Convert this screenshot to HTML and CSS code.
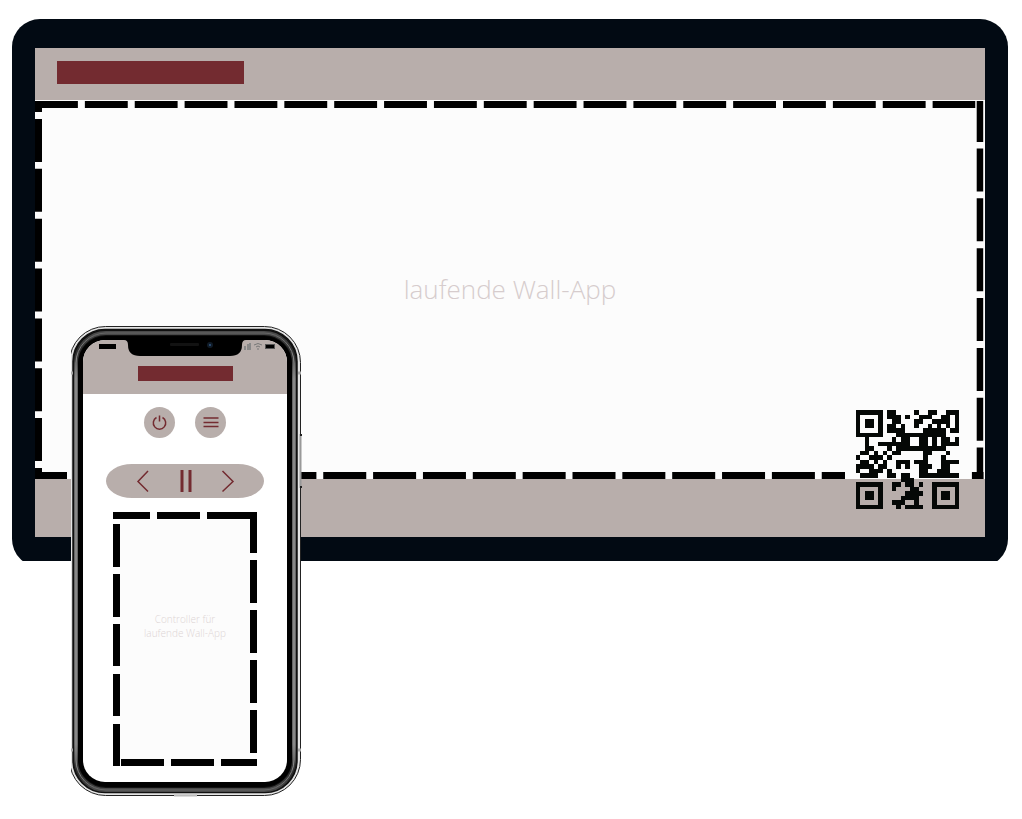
FILE: index.html
```html
<!DOCTYPE html>
<html lang="de">
<head>
<meta charset="utf-8">
<meta name="viewport" content="width=device-width, initial-scale=1">
<title>Wall-App</title>
<link rel="stylesheet" href="styles.css">
</head>
<body>
<main class="stage">
  <section class="wall">
    <div class="wall-screen">
      <header class="wall-header"><div class="wall-logo"></div></header>
      <div class="wall-app">
        <svg class="dashes" aria-hidden="true">
          <svg x="0" y="1" width="99%" height="7" viewBox="0 0 943 7" preserveAspectRatio="none"><path d="M0 3.5H943" stroke-dasharray="43 7"/></svg>
          <svg x="0" y="0" width="7" height="379"><path d="M3.5 1V12M3.5 19V379" stroke-dasharray="43 6.85"/></svg>
          <svg x="99.1%" y="0" width="7" height="379"><path d="M3.5 1V42M3.5 48.5V379" stroke-dasharray="43 6.85"/></svg>
          <svg x="0" y="372" width="810" height="7"><path d="M0 3.5H32M39 3.5H810" stroke-dasharray="43 6.85"/></svg>
          <svg x="98.6%" y="372" width="12" height="7"><path d="M0 3.5H12"/></svg>
        </svg>
        <p class="wall-label">laufende Wall-App</p>
      </div>
      <footer class="wall-footer"></footer>
      <svg class="qr" viewBox="0 0 23 22" preserveAspectRatio="none" role="img" aria-label="QR-Code"><path id="qr-path"/></svg>
    </div>
  </section>

  <section class="phone">
    <svg class="phone-frame" viewBox="0 0 231 471" aria-hidden="true">
      <defs>
        <linearGradient id="rim" x1="0" y1="0" x2="0" y2="1">
          <stop offset="0" stop-color="#4a4a4a"/><stop offset=".04" stop-color="#2c2c2c"/><stop offset=".1" stop-color="#666"/><stop offset=".9" stop-color="#666"/><stop offset=".96" stop-color="#2c2c2c"/><stop offset="1" stop-color="#4a4a4a"/>
        </linearGradient>
        <linearGradient id="shine" x1="0" y1="0" x2="0" y2="1">
          <stop offset="0" stop-color="#666"/><stop offset=".1" stop-color="#aaa"/><stop offset=".9" stop-color="#aaa"/><stop offset="1" stop-color="#666"/>
        </linearGradient>
      </defs>
      <rect x="-1.5" y=".5" width="231" height="469" rx="36" fill="#e4e4e4" stroke="#222"/>
      <rect x="2" y="3.5" width="224" height="463" rx="32" fill="#111" stroke="#111" stroke-width="1.500"/>
      <rect x="5" y="7" width="218" height="457" rx="30" fill="none" stroke="url(#rim)" stroke-width="4"/>
      <rect x="5" y="7" width="218" height="457" rx="30" fill="none" stroke="url(#shine)"/>
      <rect x="7" y="10" width="214" height="451" rx="28" fill="#000"/>
      <path d="M229.500 108V162" stroke="#999" stroke-width="2"/>
      <path d="M230 108V110M230 160V162" stroke="#222" stroke-width="2"/>
      <path d="M0 47H2M227 47H230M0 424H2M227 424H230" stroke="#aaa" stroke-width="3"/>
      <path d="M103 469.500H126" stroke="#bbb" stroke-width="2"/>
    </svg>
    <div class="phone-screen">
      <header class="phone-header">
        <svg class="status" viewBox="0 0 204 18" aria-hidden="true">
          <path d="M41 0Q45 0 45 5Q45 16 57 16H147Q159 16 159 5Q159 0 163 0Z"/>
          <rect x="87" y="3" width="29" height="3" rx="1" fill="#121212"/>
          <circle cx="127" cy="5" r="3" fill="#101b27"/><circle cx="127" cy="5" r="1" fill="#315984"/>
          <path d="M16 4H33V9H16Z"/>
          <path d="M161 6h2v4h-2zM164 4h2v6h-2zM166 3h2v7h-2z" fill="#888"/>
          <path d="M171 5Q175 2 179 5M173 7Q175 5 177 7M174 9h2" fill="none" stroke="#777"/>
          <rect x="182.500" y="4.500" width="9" height="4" stroke="#555"/>
        </svg>
        <div class="phone-logo"></div>
      </header>
      <div class="phone-body">
        <div class="round-row">
          <button class="round" type="button" aria-label="Ein/Aus"><svg width="16" height="16" viewBox="0 0 16 16"><path d="M4.500 2.500A6.200 6.200 0 1 0 10.500 2.500M7.500 .5V6.500"/></svg></button>
          <button class="round" type="button" aria-label="Menü"><svg width="16" height="16" viewBox="0 0 16 16"><path d="M.5 3H15.500M.5 7.500H15.500M.5 11.500H15.500"/></svg></button>
        </div>
        <div class="pill">
          <button type="button" aria-label="Zurück"><svg width="14" height="24" viewBox="0 0 14 24"><path d="M13 2L3 12.500L13 22.500"/></svg></button>
          <button type="button" aria-label="Pause"><svg width="14" height="24" viewBox="0 0 14 24"><path class="bars" d="M4 1V23M12 1V23"/></svg></button>
          <button type="button" aria-label="Weiter"><svg width="14" height="24" viewBox="0 0 14 24"><path d="M1.500 2L12 12.500L1.500 22.500"/></svg></button>
        </div>
        <div class="controller">
          <svg class="dashes" viewBox="0 0 144 254" aria-hidden="true">
            <path d="M0 3.500H37M44 3.500H87M94 3.500H137M140.500 0V41M140.500 48V91M140.500 98V141M140.500 148V191M140.500 198V241M3.500 12V55M3.500 62V105M3.500 112V154M3.500 162V204M3.500 212V254M8 250.500H51M58 250.500H101M108 250.500H144"/>
          </svg>
          <p>Controller für<br>laufende Wall-App</p>
        </div>
      </div>
    </div>
  </section>
</main>
<script src="qr.js"></script>
</body>
</html>
```
FILE: styles.css
```css
* { box-sizing: border-box; }
body {
  margin: 0;
  background: #fff;
  font-family: "Open Sans", "Noto Sans", sans-serif;
  font-weight: 300;
}
p { margin: 0; }
.stage {
  position: relative;
  min-height: 100vh;
  padding: 19px 14px 0 12px;
}
.wall {
  padding: 29px 23px 30px;
  border-radius: 28px;
  background: #020a13;
  clip-path: inset(0 0 6px 0);
}
.wall-screen { position: relative; background: #b8aeab; }
.wall-header { height: 52px; padding: 13px 22px; }
.wall-logo { width: 187px; height: 23px; background: #732b30; }
.wall-app {
  position: relative;
  display: grid;
  place-items: center;
  height: 379px;
  background: #fcfcfc;
}
.dashes {
  position: absolute;
  inset: 0;
  width: 100%;
  height: 100%;
  fill: none;
  stroke: #000;
  stroke-width: 7px;
}
.wall-label {
  padding-bottom: 2px;
  font-size: 26px;
  line-height: 36px;
  color: #d6cccd;
}
.wall-footer { height: 58px; }
.qr {
  position: absolute;
  right: 26px;
  bottom: 28px;
  width: 103px;
  height: 99px;
  fill: #050806;
  shape-rendering: crispEdges;
}
.phone {
  position: absolute;
  left: 71px;
  top: 326px;
  width: 231px;
  padding: 14px 15px 15px 12px;
}
.phone-frame { position: absolute; left: 0; top: 0; width: 231px; height: 471px; }
.phone-screen {
  position: relative;
  overflow: hidden;
  border-radius: 22px;
  background: #fff;
}
.phone-header {
  display: flex;
  flex-direction: column;
  align-items: center;
  gap: 8px;
  height: 54px;
  background: #b8aeab;
}
.status { display: block; width: 100%; height: 18px; }
.phone-logo { width: 95px; height: 15px; background: #732b30; }
.phone-body {
  display: flex;
  flex-direction: column;
  align-items: center;
  padding: 13px 0 16px;
}
button { padding: 0; border: 0; background: none; }
button svg { display: block; fill: none; stroke: #732b30; stroke-width: 1.5px; }
.round-row { display: flex; gap: 20px; margin-bottom: 26px; }
.round {
  display: grid;
  place-items: center;
  width: 31px;
  height: 31px;
  border-radius: 50%;
  background: #b8aeab;
}
.pill {
  display: flex;
  align-items: center;
  justify-content: center;
  gap: 29px;
  width: 158px;
  height: 34px;
  margin-bottom: 14px;
  border-radius: 26px / 17px;
  background: #b8aeab;
}
.pill .bars { stroke-width: 3px; }
.controller {
  position: relative;
  display: grid;
  place-items: center;
  width: 144px;
  height: 254px;
  padding-bottom: 26px;
  background: #fcfcfc;
  font-size: 10px;
  line-height: 14px;
  text-align: center;
  color: #ddd5d5;
}
```
FILE: qr.js
```javascript
const rows = [
  "######.##....#..##..###",
  "#....#.###.#..###..##.#",
  "#.##.#..##...##..####.#",
  "#.##.#.##.#..#..#.#.#.#",
  "#....#.####....#####.##",
  "######...###########...",
  "..#.....#.##..##.#.##.#",
  "..#..#######..##.#.####",
  "..##...#.###########...",
  ".##.#.#.##.....##...#..",
  "#..###.#.......#...#...",
  ".##.#.#..###.###...####",
  "####.##..#.#..###..##..",
  "#..###.#......##..###..",
  ".####..##.##..#########",
  "..........###..........",
  "######..##.##.#..######",
  "#....#..#...##...#....#",
  "#.##.#.....####..#.##.#",
  "#.##.#....####...#.##.#",
  "#....#..###..#...#....#",
  "######...#.####..######"
];
let d = "";
rows.forEach((row, y) => {
  [...row].forEach((cell, x) => {
    if (cell === "#") d += `M${x} ${y}h1v1h-1z`;
  });
});
document.getElementById("qr-path").setAttribute("d", d);
```
